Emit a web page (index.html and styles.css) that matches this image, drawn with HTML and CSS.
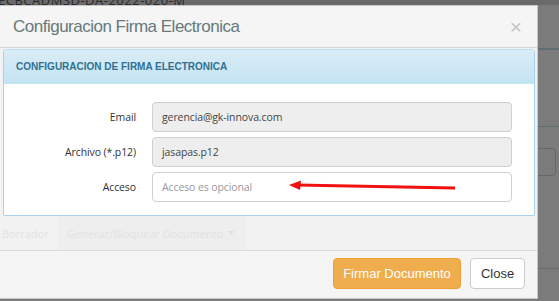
FILE: index.html
```html
<!DOCTYPE html>
<html lang="es">
<head>
  <meta charset="UTF-8">
  <title>Configuracion Firma Electronica</title>
  <link rel="stylesheet" href="styles.css">
</head>
<body>
  <!-- Pagina de fondo (tapada por el overlay) -->
  <div class="backdrop">
    <div class="backdrop-top">
      <span class="doc-code">ECBCADMSD-DA-2022-020-M</span>
    </div>
    <div class="backdrop-line l1"></div>
    <div class="backdrop-line l2"></div>
    <div class="backdrop-box"></div>
    <div class="backdrop-line l3"></div>
  </div>

  <!-- Modal -->
  <div class="modal">
    <div class="modal-header">
      <h4 class="modal-title">Configuracion Firma Electronica</h4>
      <span class="close">&times;</span>
    </div>

    <div class="modal-body">
      <div class="panel">
        <div class="panel-heading">CONFIGURACION DE FIRMA ELECTRONICA</div>
        <div class="panel-body">
          <div class="form-row">
            <label>Email</label>
            <div class="input disabled">gerencia@gk-innova.com</div>
          </div>
          <div class="form-row">
            <label>Archivo (*.p12)</label>
            <div class="input disabled">jasapas.p12</div>
          </div>
          <div class="form-row">
            <label>Acceso</label>
            <div class="input placeholder">
              Acceso es opcional
              <!-- flecha roja dibujada encima -->
              <svg class="arrow" width="170" height="14" viewBox="0 0 170 14">
                <line x1="8" y1="5" x2="166" y2="8" stroke="#f01010" stroke-width="3"/>
                <polygon points="0,5 12,0.5 11,10" fill="#f01010"/>
              </svg>
            </div>
          </div>
        </div>
      </div>

      <!-- barra de la pagina que se trasluce -->
      <div class="ghost-bar">
        <span class="ghost-text">Borrador</span>
        <span class="ghost-btn">Generar/Bloquear Documento <span class="caret"></span></span>
      </div>
    </div>

    <div class="modal-footer">
      <button class="btn btn-warning">Firmar Documento</button>
      <button class="btn btn-default">Close</button>
    </div>
  </div>
</body>
</html>
```

FILE: styles.css
```css
* {
  margin: 0;
  padding: 0;
  box-sizing: border-box;
}

body {
  width: 559px;
  height: 301px;
  overflow: hidden;
  background: #7b7b7b;
  font-family: 'Open Sans', sans-serif;
  position: relative;
}

/* Fondo */
.backdrop {
  position: absolute;
  top: 0;
  left: 0;
  width: 100%;
  height: 100%;
}

.backdrop-top {
  height: 5px;
  background: #6a6a6a;
  overflow: hidden;
  position: relative;
}

.doc-code {
  position: absolute;
  left: -2px;
  top: -9px;
  font-size: 13px;
  color: #2a2a2a;
  letter-spacing: 0.5px;
}

.backdrop-line {
  position: absolute;
  left: 537px;
  right: 0;
  height: 1px;
  background: #5f6d70;
}
.backdrop-line.l1 { top: 48px; height: 2px; }
.backdrop-line.l2 { top: 126px; }
.backdrop-line.l3 { top: 268px; background: #6a6a6a; }

.backdrop-box {
  position: absolute;
  left: 530px;
  top: 148px;
  width: 26px;
  height: 28px;
  border: 1px solid #666;
  border-radius: 4px;
}

/* Modal */
.modal {
  position: relative;
  z-index: 1;
  margin-top: 5px;
  margin-left: -1px;
  width: 539px;
  height: 294px;
  background: #f2f2f2;
  border: 1px solid #c8c8c8;
  display: flex;
  flex-direction: column;
}

.modal-header {
  height: 42px;
  background: #f5f5f5;
  border-bottom: 1px solid #d6d6d6;
  display: flex;
  align-items: center;
  justify-content: space-between;
  padding: 0 15px 0 13px;
}

.modal-title {
  font-family: 'Liberation Sans', Arial, sans-serif;
  font-weight: normal;
  font-size: 17px;
  letter-spacing: -0.5px;
  color: #66797a;
}

.close {
  font-family: 'Liberation Sans', Arial, sans-serif;
  font-size: 21px;
  color: #c4c4c4;
  line-height: 1;
}

.modal-body {
  padding: 1px 2px 0 3px;
}

.panel {
  background: #fff;
  border: 1px solid #a9d0ef;
  border-top-color: #bce0f1;
  border-radius: 4px 4px 2px 2px;
  overflow: hidden;
}

.panel-heading {
  height: 34px;
  padding: 0 12px;
  display: flex;
  align-items: center;
  background: linear-gradient(#d9edf7, #c4e3f3);
  border-bottom: 1px solid #c4e3f3;
  font-family: 'Liberation Sans', Arial, sans-serif;
  font-size: 10px;
  font-weight: bold;
  color: #31708f;
}

.panel-body {
  padding: 18px 22px 13px 0;
  display: flex;
  flex-direction: column;
  gap: 5px;
}

.form-row {
  display: flex;
  align-items: center;
}

.form-row label {
  width: 132px;
  text-align: right;
  font-size: 10.5px;
  letter-spacing: -0.1px;
  color: #333;
  margin-right: 16px;
}

.input {
  position: relative;
  flex: 1;
  height: 30px;
  border: 1px solid #cfcfcf;
  border-radius: 4px;
  padding: 0 9px;
  display: flex;
  align-items: center;
  font-size: 10.5px;
  letter-spacing: -0.1px;
  color: #444;
}

.input.disabled {
  background: #eee;
}

.input.placeholder {
  background: #fff;
  color: #999;
}

.arrow {
  position: absolute;
  left: 136px;
  top: 7px;
}

/* Barra que se trasluce */
.ghost-bar {
  height: 34px;
  display: flex;
  align-items: center;
  font-size: 11px;
  color: #e2e2e2;
}

.ghost-text {
  margin-left: -1px;
  width: 56px;
}

.ghost-btn {
  height: 34px;
  display: flex;
  align-items: center;
  padding: 0 11px 0 9px;
  background: #eeeeee;
}

.caret {
  display: inline-block;
  margin-left: 4px;
  border-top: 4px solid #e2e2e2;
  border-left: 4px solid transparent;
  border-right: 4px solid transparent;
}

.modal-footer {
  flex: 1;
  border-top: 1px solid #d9d9d9;
  background: #f5f5f5;
  display: flex;
  justify-content: flex-end;
  align-items: flex-start;
  gap: 9px;
  padding: 7px 12px 0 0;
}

.btn {
  height: 31px;
  border-radius: 4px;
  font-family: 'Liberation Sans', Arial, sans-serif;
  font-size: 13px;
  white-space: nowrap;
  padding: 0;
  cursor: pointer;
}

.btn-warning {
  width: 128px;
  background: #f0ad4e;
  border: 1px solid #eea236;
  color: #fff;
}

.btn-default {
  width: 55px;
  background: #fff;
  border: 1px solid #ccc;
  color: #333;
}
```
